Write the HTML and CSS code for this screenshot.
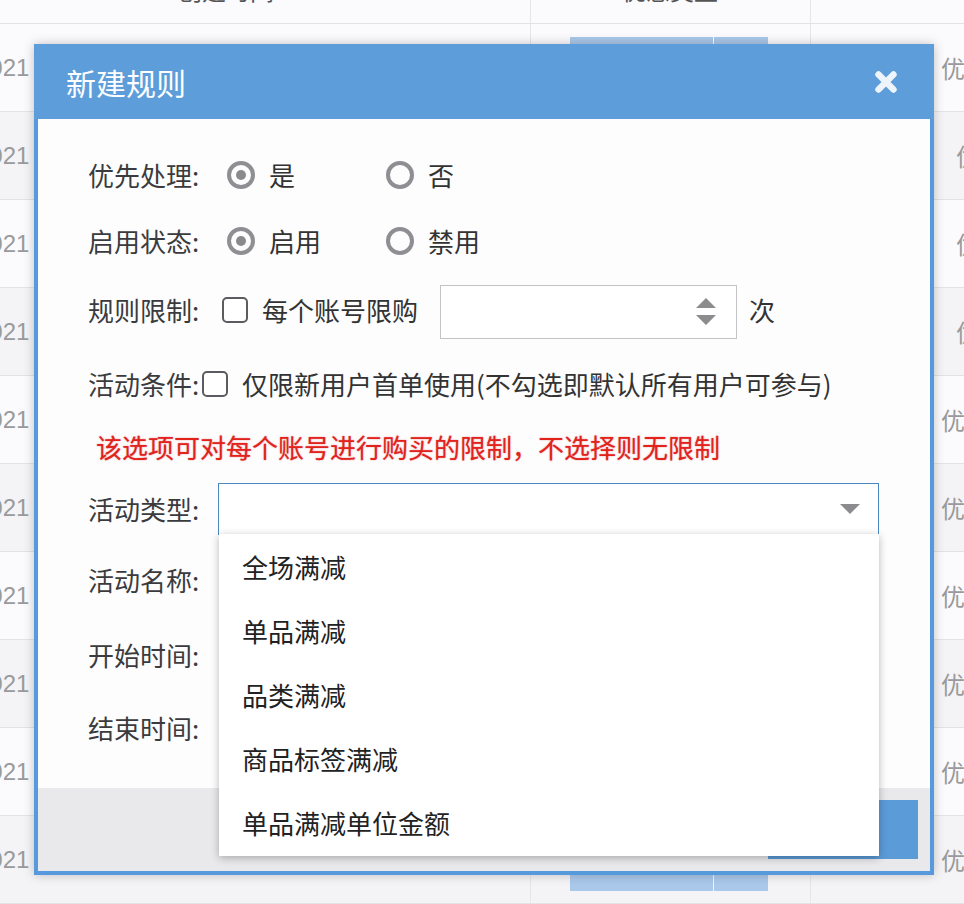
FILE: index.html
```html
<!DOCTYPE html>
<html lang="zh-CN">
<head>
<meta charset="utf-8">
<title>新建规则</title>
<link rel="stylesheet" href="styles.css">
</head>
<body>
<div class="page">
  <div class="table">
    <div class="thead">
      <div class="c c1"><span class="th th1">创建时间</span></div>
      <div class="c c2"><span class="th th2">优惠类型</span></div>
      <div class="c c3"></div>
    </div>
    <div class="tr"><div class="c c1"><span class="date">2021</span></div><div class="c c2"><span class="bgbtn a"></span><span class="bgbtn b"></span></div><div class="c c3"><span class="type">优惠活动</span></div></div>
    <div class="tr alt"><div class="c c1"><span class="date">2021</span></div><div class="c c2"><span class="bgbtn a"></span><span class="bgbtn b"></span></div><div class="c c3 indent"><span class="type">优惠活动</span></div></div>
    <div class="tr"><div class="c c1"><span class="date">2021</span></div><div class="c c2"><span class="bgbtn a"></span><span class="bgbtn b"></span></div><div class="c c3 indent"><span class="type">优惠活动</span></div></div>
    <div class="tr alt"><div class="c c1"><span class="date">2021</span></div><div class="c c2"><span class="bgbtn a"></span><span class="bgbtn b"></span></div><div class="c c3 indent"><span class="type">优惠活动</span></div></div>
    <div class="tr"><div class="c c1"><span class="date">2021</span></div><div class="c c2"><span class="bgbtn a"></span><span class="bgbtn b"></span></div><div class="c c3"><span class="type">优惠活动</span></div></div>
    <div class="tr alt"><div class="c c1"><span class="date">2021</span></div><div class="c c2"><span class="bgbtn a"></span><span class="bgbtn b"></span></div><div class="c c3"><span class="type">优惠活动</span></div></div>
    <div class="tr"><div class="c c1"><span class="date">2021</span></div><div class="c c2"><span class="bgbtn a"></span><span class="bgbtn b"></span></div><div class="c c3"><span class="type">优惠活动</span></div></div>
    <div class="tr alt"><div class="c c1"><span class="date">2021</span></div><div class="c c2"><span class="bgbtn a"></span><span class="bgbtn b"></span></div><div class="c c3"><span class="type">优惠活动</span></div></div>
    <div class="tr"><div class="c c1"><span class="date">2021</span></div><div class="c c2"><span class="bgbtn a"></span><span class="bgbtn b"></span></div><div class="c c3"><span class="type">优惠活动</span></div></div>
    <div class="tr alt"><div class="c c1"><span class="date">2021</span></div><div class="c c2"><span class="bgbtn a"></span><span class="bgbtn b"></span></div><div class="c c3"><span class="type">优惠活动</span></div></div>
  </div>

  <div class="modal">
    <div class="modal-head">
      <span class="modal-title">新建规则</span>
      <svg class="close" viewBox="0 0 24 24" width="24" height="24"><path d="M4.5 4.5 L19.5 19.5 M19.5 4.5 L4.5 19.5" stroke="#eef4fb" stroke-width="6.4" stroke-linecap="round" fill="none"/></svg>
    </div>
    <div class="modal-body">
      <div class="form">
        <div class="row">
          <span class="label">优先处理:</span>
          <div class="radios">
            <span class="opt"><span class="radio on"></span><span class="opt-text">是</span></span>
            <span class="opt"><span class="radio"></span><span class="opt-text">否</span></span>
          </div>
        </div>
        <div class="row">
          <span class="label">启用状态:</span>
          <div class="radios">
            <span class="opt"><span class="radio on"></span><span class="opt-text">启用</span></span>
            <span class="opt"><span class="radio"></span><span class="opt-text">禁用</span></span>
          </div>
        </div>
        <div class="row">
          <span class="label">规则限制:</span>
          <span class="check check-limit"></span>
          <span class="check-text">每个账号限购</span>
          <span class="num-input">
            <svg class="spin" viewBox="0 0 20 28" width="20" height="28"><path d="M0 10 L10 0 L20 10 Z M0 17 L20 17 L10 27 Z" fill="#8c8c8e"/></svg>
          </span>
          <span class="unit">次</span>
        </div>
        <div class="row">
          <span class="label">活动条件:</span>
          <span class="check check-cond"></span>
          <span class="check-text">仅限新用户首单使用(不勾选即默认所有用户可参与)</span>
        </div>
        <div class="row">
          <span class="warn">该选项可对每个账号进行购买的限制，不选择则无限制</span>
        </div>
        <div class="row">
          <span class="label">活动类型:</span>
          <div class="select">
            <svg class="caret" viewBox="0 0 20 10" width="20" height="10"><path d="M0 0 L20 0 L10 10 Z" fill="#8c8c8e"/></svg>
            <div class="dropdown">
              <div class="item">全场满减</div>
              <div class="item">单品满减</div>
              <div class="item">品类满减</div>
              <div class="item">商品标签满减</div>
              <div class="item">单品满减单位金额</div>
            </div>
          </div>
        </div>
        <div class="row"><span class="label">活动名称:</span></div>
        <div class="row"><span class="label">开始时间:</span></div>
        <div class="row"><span class="label">结束时间:</span></div>
      </div>
    </div>
    <div class="modal-foot">
      <span class="btn"></span>
    </div>
  </div>
</div>
</body>
</html>
```

FILE: styles.css
```css
html, body {
  margin: 0;
  padding: 0;
}
body {
  background: #fbfbfd;
  font-family: "Noto Sans CJK SC", "Noto Sans", sans-serif;
  color: #333;
}
.page {
  position: relative;
  width: 964px;
  height: 904px;
  overflow: hidden;
}

/* background table */
.table {
  display: flex;
  flex-direction: column;
}
.thead, .tr {
  display: flex;
  box-sizing: border-box;
  border-bottom: 1px solid #e3e3e6;
}
.thead {
  height: 24px;
}
.tr {
  height: 88px;
}
.tr.alt {
  background: #f4f4f6;
}
.c {
  display: flex;
  align-items: center;
  box-sizing: border-box;
  overflow: hidden;
  white-space: nowrap;
}
.c1 {
  width: 530px;
}
.c2 {
  width: 280px;
  border-left: 1px solid #e6e6e9;
  padding-left: 39px;
}
.c3 {
  flex: 1;
  border-left: 1px solid #e6e6e9;
  padding-left: 130px;
}
.c3.indent {
  padding-left: 145px;
}
.thead .c {
  align-items: flex-end;
  padding-bottom: 21px;
  overflow: visible;
}
.th {
  font-size: 24px;
  line-height: 24px;
  color: #555;
}
.th1 {
  margin-left: 178px;
}
.th2 {
  margin-left: 52px;
}
.date {
  font-family: "Liberation Sans", sans-serif;
  font-size: 24px;
  color: #9a9a9c;
  margin-left: -24px;
}
.type {
  font-size: 24px;
  color: #9a9a9c;
}
.bgbtn {
  height: 62px;
  background: #a9c8ea;
}
.bgbtn.a {
  width: 143px;
}
.bgbtn.b {
  width: 54px;
  margin-left: 1px;
}

/* modal */
.modal {
  position: absolute;
  left: 34px;
  top: 44px;
  width: 900px;
  height: 831px;
  box-sizing: border-box;
  background: #5699dc;
  padding: 0 4px 4px;
  display: flex;
  flex-direction: column;
  box-shadow: 0 0 10px rgba(60, 40, 50, 0.28);
}
.modal-head {
  height: 75px;
  margin: 0 -4px;
  background: #5d9eda;
  display: flex;
  align-items: center;
  justify-content: space-between;
  padding: 0 36px 0 32px;
}
.modal-title {
  font-size: 30px;
  color: #ffffff;
  line-height: 30px;
}
.close {
  display: block;
}
.modal-body {
  height: 669px;
  box-sizing: border-box;
  background: #fdfdfe;
  padding: 24px 0 0 50px;
}
.form {
  display: grid;
  grid-template-rows: 64px 68px 70px 78px 48px 76px 66px 84px 62px;
}
.row {
  display: flex;
  align-items: center;
  font-size: 26px;
  line-height: 30px;
}
.label {
  width: 112px;
  flex: none;
  color: #3b3b3d;
}
.radios {
  display: flex;
  margin-left: 27px;
}
.opt {
  display: flex;
  align-items: center;
  width: 159px;
}
.radio {
  width: 28px;
  height: 28px;
  box-sizing: border-box;
  border: 4px solid #8f8f93;
  border-radius: 50%;
  display: flex;
  align-items: center;
  justify-content: center;
  flex: none;
}
.radio.on::after {
  content: "";
  width: 10px;
  height: 10px;
  border-radius: 50%;
  background: #8a8a8e;
}
.opt-text {
  margin-left: 14px;
  color: #333;
}
.check {
  width: 26px;
  height: 26px;
  box-sizing: border-box;
  border: 2px solid #5c5c60;
  border-radius: 5px;
  flex: none;
  background: #fff;
}
.check-limit {
  margin-left: 22px;
}
.check-cond {
  margin-left: 2px;
}
.check-text {
  margin-left: 14px;
  color: #333;
  white-space: nowrap;
}
.num-input {
  width: 297px;
  height: 54px;
  box-sizing: border-box;
  border: 1px solid #c4c4c8;
  background: #fff;
  margin-left: 22px;
  display: flex;
  align-items: center;
  justify-content: flex-end;
  padding-right: 20px;
  margin-top: 4px;
}
.spin {
  display: block;
}
.unit {
  margin-left: 12px;
  color: #333;
}
.warn {
  margin-left: 8px;
  color: #e2231c;
  text-shadow: 0 0 1.5px rgba(200, 20, 20, 0.55);
}
.select {
  position: relative;
  width: 661px;
  height: 52px;
  box-sizing: border-box;
  border: 1.5px solid #4a88c2;
  background: #fff;
  margin-left: 18px;
  display: flex;
  align-items: center;
  justify-content: flex-end;
  padding-right: 18px;
}
.caret {
  display: block;
}
.dropdown {
  position: absolute;
  top: 100%;
  left: 0;
  right: -1px;
  background: #ffffff;
  box-shadow: 0 2px 8px rgba(0, 0, 0, 0.28);
  padding: 1px 0 1px;
  z-index: 5;
}
.item {
  height: 64px;
  display: flex;
  align-items: center;
  padding-left: 23px;
  color: #222;
  font-size: 26px;
}
.modal-foot {
  height: 83px;
  background: #e9e9eb;
  display: flex;
  justify-content: flex-end;
  align-items: flex-start;
  padding: 12px 12px 0 0;
  box-sizing: border-box;
}
.btn {
  width: 150px;
  height: 59px;
  background: #5b9bd8;
}
```
